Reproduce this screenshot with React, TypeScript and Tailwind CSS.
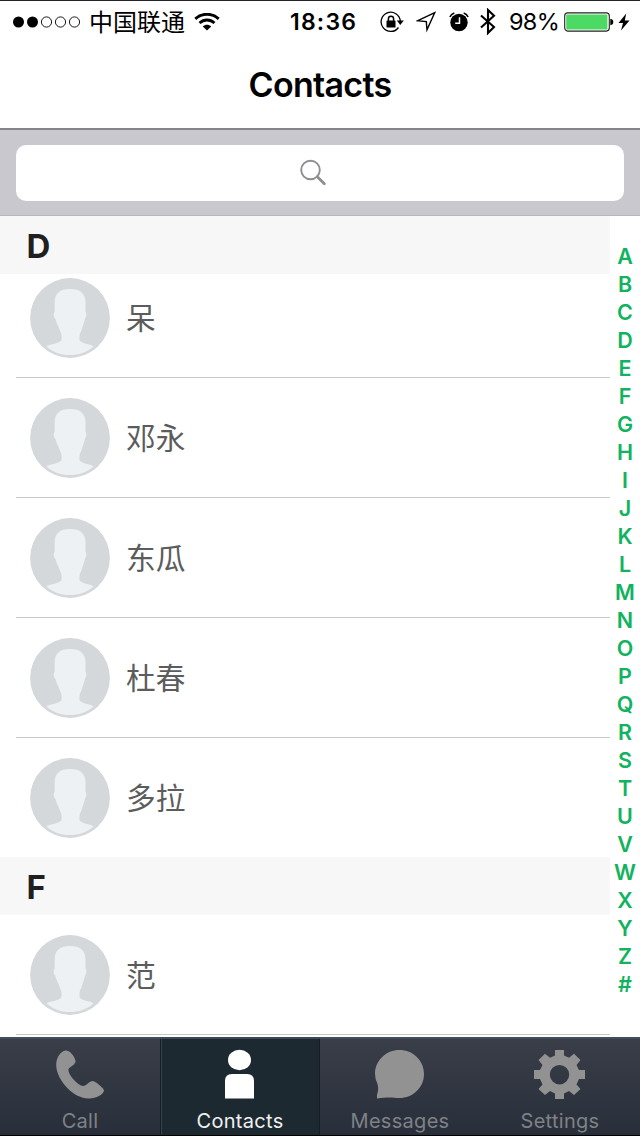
import type { ReactNode } from "react";
import clsx from "clsx";

const sections = [
  { letter: "D", names: ["呆", "邓永", "东瓜", "杜春", "多拉"] },
  { letter: "F", names: ["范"] },
];

const indexLetters = "ABCDEFGHIJKLMNOPQRSTUVWXYZ#".split("");

const Avatar = () => (
  <svg className="h-20 w-20 shrink-0" viewBox="0 0 80 80">
    <circle cx="40" cy="40" r="39.900" fill="#d4d8db" />
    <path
      d="M40 11C50 11 55.300 15.500 55.500 23.500V34C57 35 56.500 39.500 55 40.500C54.200 45 52.300 49 51 53.500C49.600 55 49.300 59 49.500 62C51 66 60 65.500 63.500 68.500C57 74.500 49 77 40 77C31 77 23 74.500 16.500 68.500C20 65.500 30 66 31.500 62C31.800 59 31.500 55 30.200 53.500C28.800 49 26.200 45 25.200 40.500C23.500 39.500 23 35 24.700 34V23.500C24.900 15.500 30 11 40 11Z"
      fill="#edf1f4"
    />
  </svg>
);

const StatusBar = () => (
  <div className="flex h-[42px] items-center pl-[13px] font-['Inter','Noto_Sans_CJK_SC',sans-serif] text-black">
    <svg className="h-3 w-[68px] shrink-0" viewBox="0 0 68 12">
      <circle cx="5.500" cy="6" r="5.500" />
      <circle cx="19.500" cy="6" r="5.500" />
      {[33.5, 47.5, 61.5].map((cx) => (
        <circle key={cx} cx={cx} cy="6" r="5.100" fill="none" stroke="#000" strokeWidth="0.900" />
      ))}
    </svg>
    <span className="ml-2 w-24 pt-0.5 text-2xl leading-none whitespace-nowrap">中国联通</span>
    <svg className="ml-[9px] h-[19px] w-[26px] shrink-0" viewBox="0 0 26 19" fill="none" stroke="#000">
      <path d="M1.300 5.800C8 -0.200 18 -0.200 24.700 5.800" strokeWidth="3" />
      <path d="M5.500 10C10 6 16 6 20.500 10" strokeWidth="2.800" />
      <path d="M8.800 13.500C11.300 11.200 14.700 11.200 17.200 13.500L13 17.500Z" fill="#000" stroke="none" />
    </svg>
    <span className="ml-[70px] w-[80px] text-[23px] leading-none font-semibold tracking-[1.2px]">18:36</span>
    <svg className="ml-2.5 h-6 w-6 shrink-0" viewBox="0 0 24 24">
      <path d="M18.500 17.500A9.600 9.600 0 1 1 20.300 11" fill="none" stroke="#000" strokeWidth="1.300" />
      <path d="M16.800 10.500H23.800L20.300 15Z" />
      <rect x="6.500" y="10.500" width="9" height="7" rx="0.600" />
      <path d="M8.400 11V8.800a2.600 2.600 0 0 1 5.200 0V11" fill="none" stroke="#000" strokeWidth="1.500" />
    </svg>
    <svg className="ml-3 h-[22px] w-5 shrink-0" viewBox="0 0 20 22">
      <path d="M18.800 1.500L11 18.700L10.300 10.600L1.800 9.700Z" fill="none" stroke="#000" strokeWidth="1.400" />
    </svg>
    <svg className="ml-[13px] h-5 w-5 shrink-0" viewBox="0 0 20 20">
      <circle cx="10" cy="10.500" r="8.700" />
      <path d="M10.500 5.200V11.300H6.200" fill="none" stroke="#fff" strokeWidth="1.500" />
      <path d="M0.900 5Q2 2.100 5.300 1M14.700 1Q18 2.100 19.100 5" fill="none" stroke="#000" strokeWidth="1.500" />
    </svg>
    <svg className="ml-[11px] h-7 w-4 shrink-0" viewBox="0 0 16 28" fill="none" stroke="#000" strokeWidth="2.100">
      <path d="M1 7.500L14 19L8 25V2L14 7.800L1 19.500" />
    </svg>
    <span className="ml-[13px] w-[51px] text-[23.500px] leading-none tracking-[-0.7px]">98%</span>
    <svg className="ml-1 h-5 w-[50px] shrink-0" viewBox="0 0 50 20">
      <rect x="0.700" y="0.900" width="44.600" height="18.200" rx="3" fill="#fff" stroke="#222" strokeWidth="1.100" />
      <rect x="2.200" y="2.400" width="41.200" height="15.200" rx="1.200" fill="#4cd964" />
      <path d="M46.300 6.800Q49.300 7.300 49.300 10T46.300 13.200Z" />
    </svg>
    <svg className="ml-1 h-[18px] w-3 shrink-0" viewBox="0 0 12 18">
      <path d="M8.200 0.500L0.500 10H5L3 17.500L11.500 7.500H6.800Z" />
    </svg>
  </div>
);

const SectionHeader = ({ letter }: { letter: string }) => (
  <div className="relative z-10 flex h-[58px] shrink-0 items-center bg-[#f7f7f7] pt-[3px] pl-[26.500px] text-[33px] font-bold text-[#1f1f1f]">
    {letter}
  </div>
);

const ContactRow = ({ name, last }: { name: string; last?: boolean }) => (
  <div
    className={clsx(
      "ml-4 flex shrink-0 items-center border-[#c8c7cc] pl-3.5",
      last ? "h-[119px]" : "h-[120px] border-b",
    )}
  >
    <Avatar />
    <span className="ml-4 pt-0.5 text-[29.700px] leading-none text-[#5c5c5c]">{name}</span>
  </div>
);

const Tab = ({ label, active, children }: { label: string; active?: boolean; children: ReactNode }) => (
  <div
    className={clsx(
      "flex h-full w-40 flex-col items-center border-t-2 pt-[9px]",
      active
        ? "border-t-[#394957] bg-[#1d2930] text-white shadow-[inset_1px_0_#151d24,inset_2px_0_#35434d,inset_-1px_0_#151d24]"
        : "border-[#414f5d] bg-linear-to-b from-[#393e49] to-[#292f3a] text-[#929292]",
    )}
  >
    <svg className="h-[52px] w-[54px] shrink-0" viewBox="0 0 54 52" fill="currentColor">
      {children}
    </svg>
    <span
      className={clsx(
        "mt-[9px] text-xl leading-6 tracking-[0.3px]",
        active ? "text-[#f0f0f0]" : "text-[#7e8286]",
      )}
    >
      {label}
    </span>
  </div>
);

export default function App() {
  return (
    <div className="flex h-[1136px] w-[640px] flex-col overflow-hidden border-y border-t-[#252329] border-b-black bg-white font-['Inter','Noto_Sans_CJK_SC',sans-serif]">
      <StatusBar />
      <h1 className="h-[85px] text-center text-[34px] leading-[84px] font-semibold tracking-[-0.700px] text-black">
        Contacts
      </h1>
      <div className="flex h-[88px] shrink-0 flex-col border-t-2 border-b border-t-[#85848a] border-b-[#b7b6bc] bg-[#c9c8ce] px-4 pt-[15px]">
        <div className="flex h-14 items-center justify-center rounded-[10px] bg-white">
          <svg className="mr-[13px] h-7 w-7 -translate-x-px" viewBox="0 0 28 28" fill="none" stroke="#8e8e93">
            <circle cx="11.500" cy="11" r="9.300" strokeWidth="1.900" />
            <path d="M18.300 17.800L25.300 24.800" strokeWidth="2.800" strokeLinecap="round" />
          </svg>
        </div>
      </div>
      <div className="flex h-[821px] shrink-0 overflow-hidden">
        <div className="flex w-[610px] flex-col">
          {sections.map(({ letter, names }, i) => (
            <div key={letter} className="flex shrink-0 flex-col">
              <SectionHeader letter={letter} />
              {/* the first section is scrolled a little way under its header */}
              <div className={clsx("flex flex-col", i === 0 && "-mt-4")}>
                {names.map((name, j) => (
                  <ContactRow key={name} name={name} last={i === 0 && j === names.length - 1} />
                ))}
              </div>
            </div>
          ))}
        </div>
        <div className="flex w-[30px] flex-col items-center pt-[26px] text-[21.500px] font-semibold text-[#12b35f]">
          {indexLetters.map((letter) => (
            <span key={letter} className="h-7 leading-7">
              {letter}
            </span>
          ))}
        </div>
      </div>
      <div className="flex h-[98px] shrink-0 bg-[#292f3a]">
        <Tab label="Call">
          <path d="M13.500 2.500Q10 2.200 6.500 6.500Q3 11 3.200 18C4.500 34 22 51 36 50.500C44 50.500 49.500 46.500 51 43C51.500 40.500 44 34.500 40 33C36 33 33.500 38 30 38C24 37 14.500 26 15.500 21C17 18.500 22.500 17 22.500 13C22 9 17.500 3 13.500 2.500Z" />
        </Tab>
        <Tab label="Contacts" active>
          <ellipse cx="26.500" cy="12" rx="11.500" ry="10.200" />
          <path d="M12 50.500V33Q12 26 19 26H34Q41 26 41 33V50.500Z" />
        </Tab>
        <Tab label="Messages">
          <path d="M26.500 2C40 2 51 12.500 51 26S40 50 26.500 50C20 50 17 48.500 4 50.500Q3.500 47 5 43Q5.500 40 4.500 36Q2 31 2 26C2 12.500 13 2 26.500 2Z" />
        </Tab>
        <Tab label="Settings">
          <path
            fillRule="evenodd"
            transform="translate(-0.500 0)"
            d="M22.500 2H31.500V7.500L36.500 9.800L41.500 5.800L48 12L44 17L46.500 22H52.500V31H46.500L44 36.500L48 41L41.500 47L36.500 43L31.500 45.500V51H22.500V45.500L17.500 43L12.500 47L6 41L10 36.500L7.500 31H1.500V22H7.500L10 17L6 12L12.500 5.800L17.500 9.800L22.500 7.500ZM27 17A9.700 9.700 0 1 0 27 36.400A9.700 9.700 0 1 0 27 17Z"
          />
        </Tab>
      </div>
    </div>
  );
}
